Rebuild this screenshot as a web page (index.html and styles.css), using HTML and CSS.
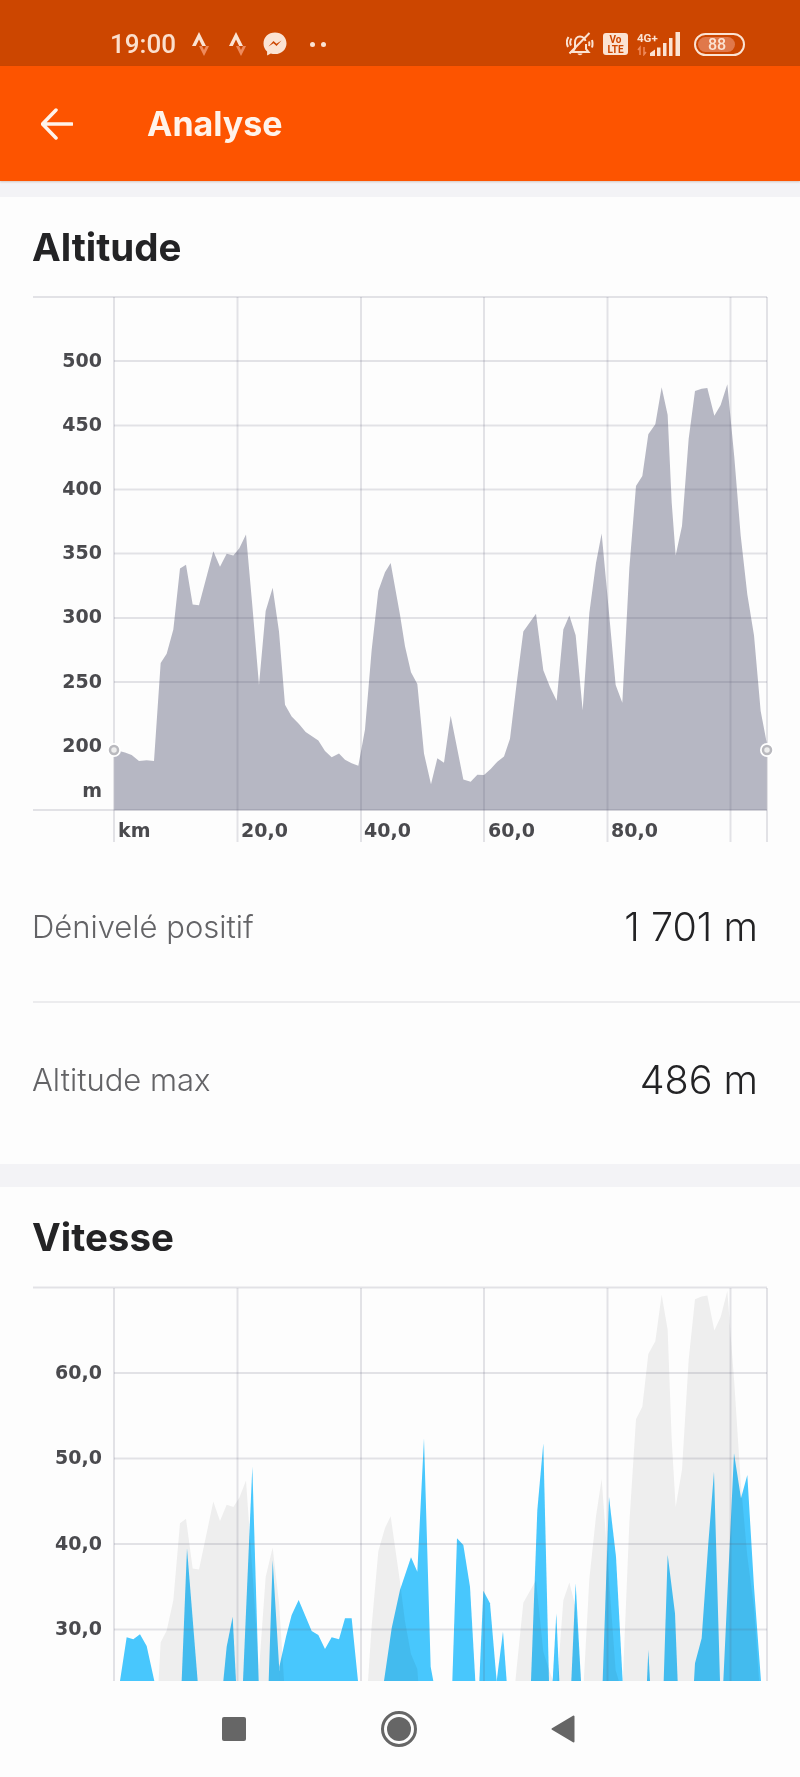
FILE: index.html
```html
<!DOCTYPE html>
<html lang="fr">
<head>
    <meta charset="utf-8">
    <title>Analyse</title>
    <link rel="stylesheet" href="styles.css">
</head>
<body>
    <div class="phone">
        <!-- Status bar -->
        <div class="statusbar">
            <div class="status-group">
                <span class="clock">19:00</span>
                <svg class="ic-strava" viewBox="0 0 18 24">
                    <path class="ink" d="M7 0L14 14H10.200L7 7.600L3.800 14H0Z"/>
                    <path class="ink-dim" d="M7 14H10L12 18L14 14H17L12 24Z"/>
                </svg>
                <svg class="ic-strava" viewBox="0 0 18 24">
                    <path class="ink" d="M7 0L14 14H10.200L7 7.600L3.800 14H0Z"/>
                    <path class="ink-dim" d="M7 14H10L12 18L14 14H17L12 24Z"/>
                </svg>
                <svg class="ic-messenger" viewBox="0 0 24 24">
                    <path class="ink" d="M12 .5C5.400.5.500 5.200.500 11.400c0 3.300 1.400 6.100 3.600 8v4l3.700-2c1.300.4 2.700.6 4.200.6 6.600 0 11.500-4.800 11.500-10.600C23.500 5.200 18.600.5 12 .5Z"/>
                    <path class="bar-cut" d="M5.500 14.500L10.500 9l3 2.800L18.500 8.500l-5 5.600-3-2.800Z"/>
                </svg>
                <span class="dots"><i></i><i></i></span>
            </div>
            <div class="status-group status-right">
                <svg class="ic-bell" viewBox="0 0 28 24">
                    <path class="line" d="M9 17V10.500C9 7 11 4.500 14 4.500S19 7 19.500 9M20 12V17L22.500 20H5.500L9 17"/>
                    <path class="line" d="M3.500 21.500L23.500 1M5.500 6.500C4 8.500 4 11.500 5 13.500M2.500 5C.5 8 .5 12 2 15M23 9.500C23.500 11 23.500 12.500 23 14M26 8C26.700 10.500 26.700 13 26 15.500"/>
                    <path class="ink" d="M11.500 21.500H16.500C16 23.700 12 23.700 11.500 21.500Z"/>
                </svg>
                <svg class="ic-volte" viewBox="0 0 25 22">
                    <rect class="ink" width="25" height="22" rx="3"/>
                    <text class="volte-text" x="12.500" y="10">Vo</text>
                    <text class="volte-text" x="12.500" y="19.500">LTE</text>
                </svg>
                <svg class="ic-signal" viewBox="0 0 48 24">
                    <text class="net-text" x="0" y="10">4G+</text>
                    <path class="net-arrows" d="M3 23V15.500L1 18M7 15V22.500L9 20"/>
                    <path class="ink" d="M13 24V21L18 17.500V24ZM20 24V15.500H23.500V24ZM26 24V11H29.500V24ZM32 24V6H35.500V24ZM38.500 24V0H43V24Z"/>
                </svg>
                <div class="battery"><div class="battery-level"></div><span class="battery-num">88</span></div>
            </div>
        </div>

        <!-- Toolbar -->
        <header class="toolbar">
            <svg class="ic-back" viewBox="0 0 32 32">
                <path d="M31 16H2M15 2L1.500 16L15 30"/>
            </svg>
            <h1 class="toolbar-title">Analyse</h1>
        </header>

        <main class="content">
            <section class="card">
                <h2 class="card-title">Altitude</h2>
                <svg class="chart chart-altitude" viewBox="0 0 800 565">
                    <defs>
                        <!-- elevation trace shared by both charts, 1200 x-units per 400px -->
                        <polygon id="profile" points="343,1433 343,1270 375,1277 395,1284 417,1300 440,1298 462,1300 482,1035 500,1010 520,945 540,780 558,770 578,877 597,879 640,733 660,775 680,740 700,745 718,725 738,688 757,880 777,1095 797,895 818,832 837,950 855,1148 875,1180 897,1200 917,1222 955,1245 975,1273 995,1290 1017,1280 1035,1297 1055,1306 1075,1313 1095,1215 1115,1000 1135,840 1155,790 1172,765 1200,905 1215,990 1233,1060 1252,1092 1272,1280 1293,1363 1312,1293 1332,1305 1352,1178 1390,1350 1412,1356 1432,1337 1452,1338 1472,1322 1492,1302 1512,1288 1530,1240 1550,1090 1570,950 1608,902 1630,1055 1650,1100 1670,1137 1690,945 1708,907 1727,960 1748,1163 1768,900 1788,765 1805,685 1825,880 1847,1095 1867,1143 1888,780 1908,557 1927,530 1945,417 1966,390 1985,290 2003,365 2015,600 2027,745 2046,665 2066,430 2085,300 2105,294 2122,292 2143,367 2162,338 2182,282 2203,480 2222,690 2242,850 2262,960 2282,1165 2300,1250 2300,1433"/>
                    </defs>

                    <use class="fill-altitude" href="#profile" transform="matrix(.33333 0 0 .36996 0 0)"/>

                    <g class="grid">
                        <path d="M33 17H767M114 81H767M114 145.500H767M114 209.500H767M114 273.500H767M114 338H767M114 402H767M33 530H767"/>
                        <path d="M114 17V562M237.500 17V562M361 17V562M484 17V562M607.500 17V562M730.500 17V562M767 17V562"/>
                    </g>

                    <circle class="end-halo" cx="114" cy="470" r="7"/>
                    <circle class="end-dot" cx="114" cy="470" r="4"/>
                    <circle class="end-halo" cx="767" cy="470" r="7"/>
                    <circle class="end-dot" cx="767" cy="470" r="4"/>

                    <g class="axis-y">
                        <text x="102" y="87">500</text>
                        <text x="102" y="151">450</text>
                        <text x="102" y="215">400</text>
                        <text x="102" y="279">350</text>
                        <text x="102" y="343">300</text>
                        <text x="102" y="408">250</text>
                        <text x="102" y="472">200</text>
                        <text x="102" y="517">m</text>
                    </g>
                    <g class="axis-x">
                        <text x="118" y="557">km</text>
                        <text x="241" y="557">20,0</text>
                        <text x="364" y="557">40,0</text>
                        <text x="488" y="557">60,0</text>
                        <text x="611" y="557">80,0</text>
                    </g>
                </svg>

                <div class="stat stat-first">
                    <span class="stat-label">Dénivelé positif</span>
                    <span class="stat-value">1 701 m</span>
                </div>
                <div class="stat stat-last">
                    <span class="stat-label">Altitude max</span>
                    <span class="stat-value">486 m</span>
                </div>
            </section>

            <section class="card">
                <h2 class="card-title">Vitesse</h2>
                <svg class="chart chart-speed" viewBox="0 0 800 411">
                    <use class="fill-backdrop" href="#profile" transform="matrix(.33333 0 0 .46667 0 -110.670)"/>

                    <g class="speed-areas" transform="scale(.33333)">
                        <polygon points="360,1233 380,1102 400,1108 420,1093 440,1128 463,1233"/>
                        <polygon points="545,1233 561,835 593,1233"/>
                        <polygon points="670,1233 680,1130 698,1040 708,1233"/>
                        <polygon points="729,1233 757,590 776,1233"/>
                        <polygon points="806,1233 818,870 838,1200 855,1233"/>
                        <polygon points="838,1233 838,1190 858,1100 875,1035 896,990 935,1083 955,1095 975,1137 995,1102 1017,1108 1035,1045 1055,1045 1074,1233"/>
                        <polygon points="1152,1233 1175,1075 1200,960 1233,862 1252,905 1272,505 1292,1190 1300,1233"/>
                        <polygon points="1357,1233 1371,805 1390,825 1410,950 1426,1233"/>
                        <polygon points="1438,1233 1450,962 1470,1000 1490,1233"/>
                        <polygon points="1490,1233 1509,1085 1520,1233"/>
                        <polygon points="1593,1233 1612,720 1630,520 1647,1233"/>
                        <polygon points="1658,1233 1669,1030 1678,1233"/>
                        <polygon points="1714,1233 1727,940 1743,1233"/>
                        <polygon points="1808,1233 1827,680 1848,860 1868,1233"/>
                        <polygon points="1941,1233 1945,1140 1950,1233"/>
                        <polygon points="1991,1233 2003,855 2025,1030 2033,1233"/>
                        <polygon points="2082,1233 2085,1180 2105,1105 2125,820 2142,605 2160,1233"/>
                        <polygon points="2170,1233 2202,550 2223,685 2242,615 2262,950 2283,1233"/>
                    </g>

                    <g class="grid">
                        <path d="M33 17.500H767M114 103H767M114 188.500H767M114 274H767M114 359.500H767"/>
                        <path d="M114 18V411M237.500 18V411M361 18V411M484 18V411M607.500 18V411M730.500 18V411M767 18V411"/>
                    </g>

                    <g class="axis-y">
                        <text x="102" y="109">60,0</text>
                        <text x="102" y="194">50,0</text>
                        <text x="102" y="280">40,0</text>
                        <text x="102" y="365">30,0</text>
                    </g>
                </svg>
            </section>
        </main>

        <!-- Android navigation -->
        <nav class="navbar">
            <div class="nav-square"></div>
            <div class="nav-circle"><div class="nav-circle-dot"></div></div>
            <svg class="nav-back" viewBox="0 0 24 28">
                <path d="M22.500 1.500V26.500L1.500 14Z"/>
            </svg>
        </nav>
    </div>
</body>
</html>
```

FILE: styles.css
```css
* {
    box-sizing: border-box;
}
html, body {
    margin: 0;
    padding: 0;
}
body {
    font-family: "Inter", "Liberation Sans", sans-serif;
    background-color: #f3f3f6;
}
.phone {
    width: 800px;
    height: 1777px;
    display: flex;
    flex-direction: column;
    overflow: hidden;
}

/* Status bar */
.statusbar {
    height: 66px;
    flex: none;
    background-color: #cc4600;
    display: flex;
    justify-content: space-between;
    align-items: center;
    padding: 22px 55px 0 110px;
}
.status-group {
    display: flex;
    align-items: center;
}
.status-right {
    gap: 9px;
}
.clock {
    font-family: "Roboto", sans-serif;
    font-size: 26px;
    font-weight: 500;
    color: #fbdfcd;
    margin-right: 16px;
}
.ink {
    fill: #fbe3d3;
}
.ink-dim {
    fill: #ee8a5c;
}
.line {
    fill: none;
    stroke: #fbe3d3;
    stroke-width: 2;
}
.bar-cut {
    fill: #cc4600;
}
.ic-strava {
    width: 18px;
    height: 24px;
    margin-right: 19px;
}
.ic-messenger {
    width: 24px;
    height: 24px;
    margin-left: -3px;
}
.dots {
    display: flex;
    gap: 6px;
    margin-left: 23px;
}
.dots i {
    width: 5px;
    height: 5px;
    border-radius: 50%;
    background-color: #fbe3d3;
}
.ic-bell {
    width: 28px;
    height: 24px;
}
.ic-volte {
    width: 25px;
    height: 22px;
}
.volte-text {
    font-family: "Roboto", sans-serif;
    font-size: 10px;
    font-weight: 700;
    fill: #cc4600;
    text-anchor: middle;
}
.ic-signal {
    width: 48px;
    height: 24px;
}
.net-text {
    font-family: "Roboto", sans-serif;
    font-size: 11.500px;
    font-weight: 700;
    fill: #fbe3d3;
}
.net-arrows {
    fill: none;
    stroke: #ee8a5c;
    stroke-width: 1.500;
}
.battery {
    width: 51px;
    height: 23px;
    border: 2px solid #fbe3d3;
    border-radius: 12px;
    padding: 2px;
    position: relative;
}
.battery-level {
    width: 86%;
    height: 100%;
    border-radius: 8px;
    background-color: #e0784a;
}
.battery-num {
    position: absolute;
    left: 12px;
    top: 0;
    font-family: "Roboto", sans-serif;
    font-size: 16px;
    line-height: 19px;
    font-weight: 500;
    color: #fbe3d3;
}

/* Toolbar */
.toolbar {
    height: 115px;
    flex: none;
    background-color: #fd5400;
    display: flex;
    align-items: center;
    padding-left: 41px;
    gap: 74px;
    box-shadow: 0 1px 2px rgba(120, 60, 30, 0.25);
    position: relative;
}
.ic-back {
    width: 32px;
    height: 32px;
    fill: none;
    stroke: #fff3ea;
    stroke-width: 3.500;
    stroke-linecap: round;
    stroke-linejoin: round;
}
.toolbar-title {
    margin: 0;
    font-size: 34px;
    font-weight: 700;
    color: #fff3ea;
}

/* Cards */
.content {
    flex: 1;
    min-height: 0;
    padding-top: 16px;
    display: flex;
    flex-direction: column;
    gap: 23px;
    overflow: hidden;
}
.card {
    background-color: #fdfdfd;
    flex: none;
}
.card-title {
    margin: 0;
    height: 83px;
    padding: 30px 0 0 32px;
    font-size: 38.500px;
    line-height: 40px;
    font-weight: 700;
    color: #232325;
}
.chart {
    display: block;
    width: 800px;
}
.chart-altitude {
    height: 565px;
}
.chart-speed {
    height: 411px;
}
.fill-altitude {
    fill: #b6b7c3;
}
.fill-backdrop {
    fill: #eeeeee;
}
.speed-areas {
    fill: #48c9ff;
    mix-blend-mode: multiply;
}
.grid path {
    fill: none;
    stroke: rgba(90, 90, 110, 0.16);
    stroke-width: 2;
}
.end-halo {
    fill: #ffffff;
}
.end-dot {
    fill: #eeeeee;
    stroke: #b9b9be;
    stroke-width: 2.500;
}
.axis-y text, .axis-x text {
    font-family: "DejaVu Sans", sans-serif;
    font-size: 19px;
    font-weight: 700;
    fill: #4a4a4e;
}
.axis-y text {
    text-anchor: end;
}

/* Stat rows */
.stat {
    display: flex;
    justify-content: space-between;
    align-items: center;
    margin-left: 33px;
    padding-right: 42px;
}
.stat-first {
    height: 158px;
    padding-top: 7px;
    border-bottom: 2px solid #ececee;
}
.stat-last {
    height: 161px;
    padding-bottom: 8px;
}
.stat-label {
    font-size: 31px;
    font-weight: 300;
    color: #636366;
    margin-left: -1px;
}
.stat-value {
    font-size: 39.500px;
    font-weight: 300;
    color: #232325;
}

/* Navigation bar */
.navbar {
    height: 96px;
    flex: none;
    background-color: #fdfdfd;
    display: flex;
    align-items: center;
    padding: 0 0 0 222px;
    position: relative;
}
.nav-square {
    width: 24px;
    height: 24px;
    border-radius: 2px;
    background-color: #666666;
}
.nav-circle {
    width: 36px;
    height: 36px;
    margin-left: 135px;
    border: 3px solid #666666;
    border-radius: 50%;
    display: flex;
    align-items: center;
    justify-content: center;
}
.nav-circle-dot {
    width: 24px;
    height: 24px;
    border-radius: 50%;
    background-color: #666666;
}
.nav-back {
    width: 24px;
    height: 28px;
    margin-left: 134px;
    fill: #666666;
    stroke: #666666;
    stroke-width: 2;
    stroke-linejoin: round;
}
```
